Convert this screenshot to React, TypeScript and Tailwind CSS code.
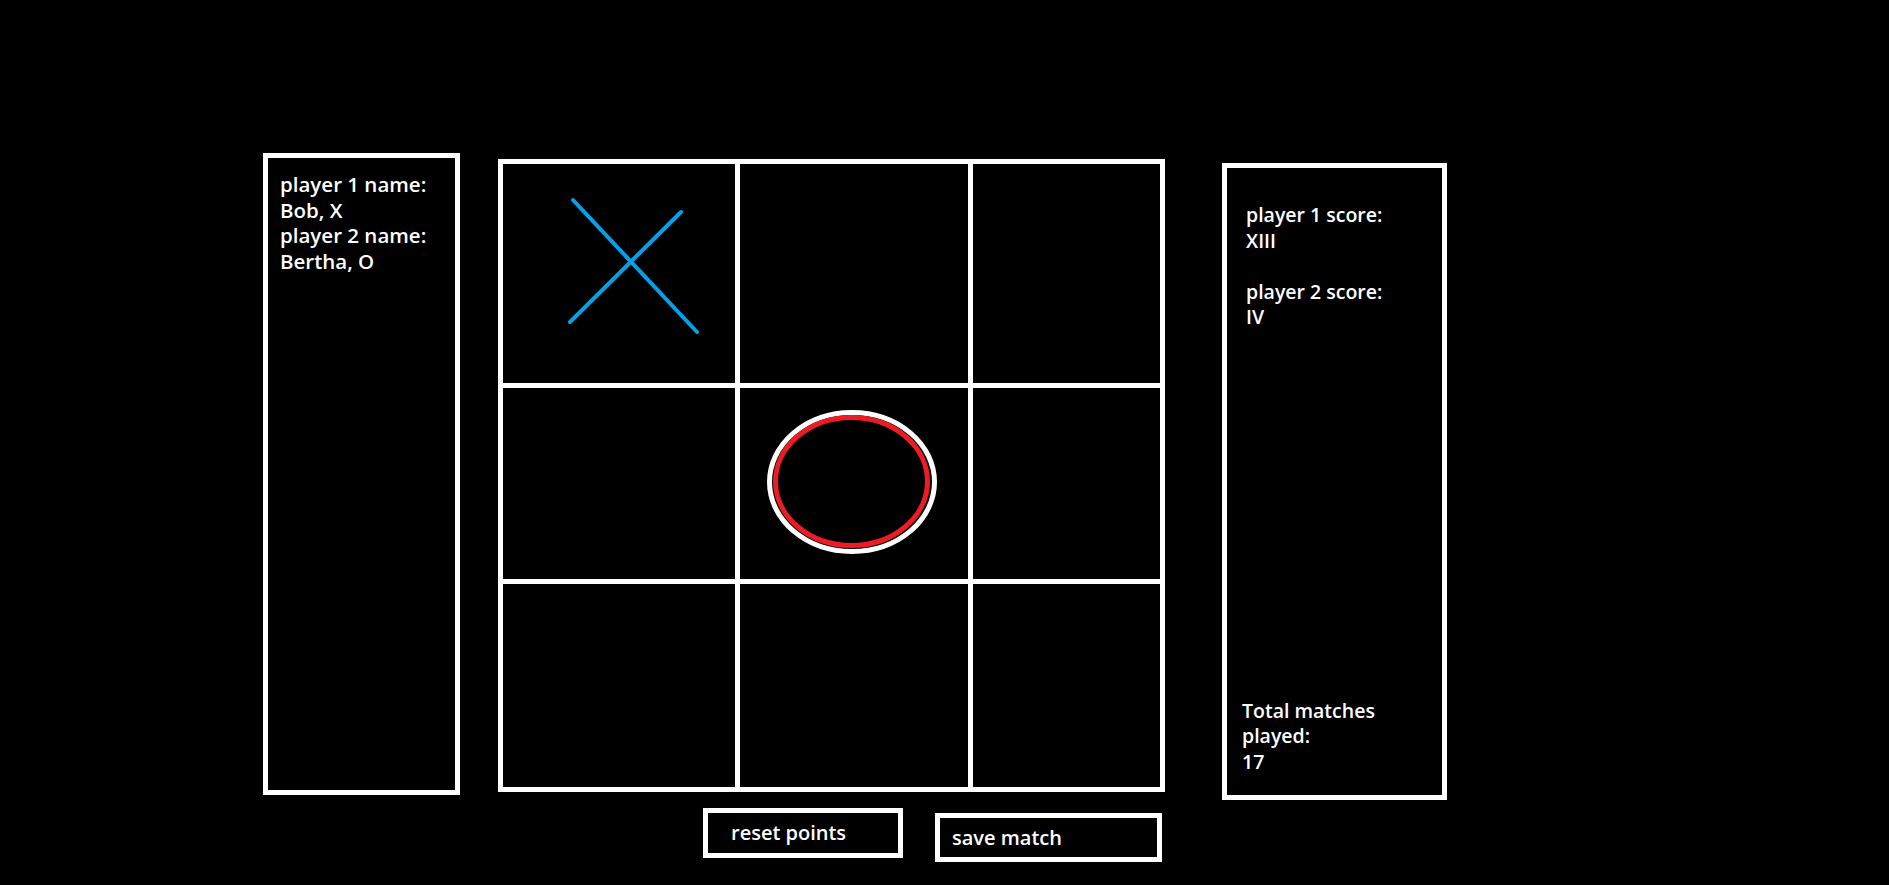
import React from 'react';

const FONT = { fontFamily: '"Open Sans", "DejaVu Sans", sans-serif' };

function XMark() {
  return (
    <svg width="232" height="219" viewBox="0 0 232 219">
      <line x1="70" y1="36" x2="194" y2="168" stroke="#00a2e8" strokeWidth="4" strokeLinecap="round" />
      <line x1="178" y1="48" x2="67" y2="158" stroke="#00a2e8" strokeWidth="4" strokeLinecap="round" />
    </svg>
  );
}

function OMark() {
  return (
    <svg width="228" height="191" viewBox="0 0 228 191">
      <ellipse cx="112" cy="94" rx="82.5" ry="69.5" fill="none" stroke="#ffffff" strokeWidth="5" />
      <ellipse cx="111.5" cy="93.5" rx="76" ry="64" fill="none" stroke="#ed1c24" strokeWidth="5" />
    </svg>
  );
}

export default function App() {
  const cells: (null | 'x' | 'o')[] = ['x', null, null, null, 'o', null, null, null, null];

  return (
    <div className="w-full h-[885px] bg-black text-white font-semibold overflow-hidden" style={FONT}>
      <div className="flex items-start pl-[263px] pt-[153px]">
        {/* players */}
        <div className="w-[197px] h-[642px] border-[5px] border-white pt-[14px] pl-[12px] text-[20.5px] leading-[25.5px]">
          <div>player 1 name:</div>
          <div>Bob, X</div>
          <div>player 2 name:</div>
          <div>Bertha, O</div>
        </div>

        {/* board + buttons */}
        <div className="ml-[38px] mt-[6px] flex flex-col">
          <div className="bg-white p-[5px] grid grid-cols-[232px_228px_187px] grid-rows-[219px_191px_203px] gap-[5px]">
            {cells.map((c, i) => (
              <div key={i} className="bg-black overflow-hidden">
                {c === 'x' && <XMark />}
                {c === 'o' && <OMark />}
              </div>
            ))}
          </div>
          <div className="flex items-start mt-[16px] ml-[205px] text-[20px] leading-[25px]">
            <button className="w-[200px] h-[50px] border-[5px] border-white flex items-center pl-[23px] pb-[2px] font-semibold">
              reset points
            </button>
            <button className="w-[227px] h-[49px] border-[5px] border-white flex items-center pl-[12px] ml-[32px] mt-[5px] font-semibold">
              save match
            </button>
          </div>
        </div>

        {/* scores */}
        <div className="ml-[57px] mt-[10px] w-[225px] h-[637px] border-[5px] border-white flex flex-col justify-between text-[19.5px] leading-[25.5px]">
          <div className="pt-[34px] pl-[19px]">
            <div>player 1 score:</div>
            <div>XIII</div>
            <div className="h-[25.5px]" />
            <div>player 2 score:</div>
            <div>IV</div>
          </div>
          <div className="pb-[21px] pl-[15px]">
            <div>Total matches</div>
            <div>played:</div>
            <div>17</div>
          </div>
        </div>
      </div>
    </div>
  );
}
